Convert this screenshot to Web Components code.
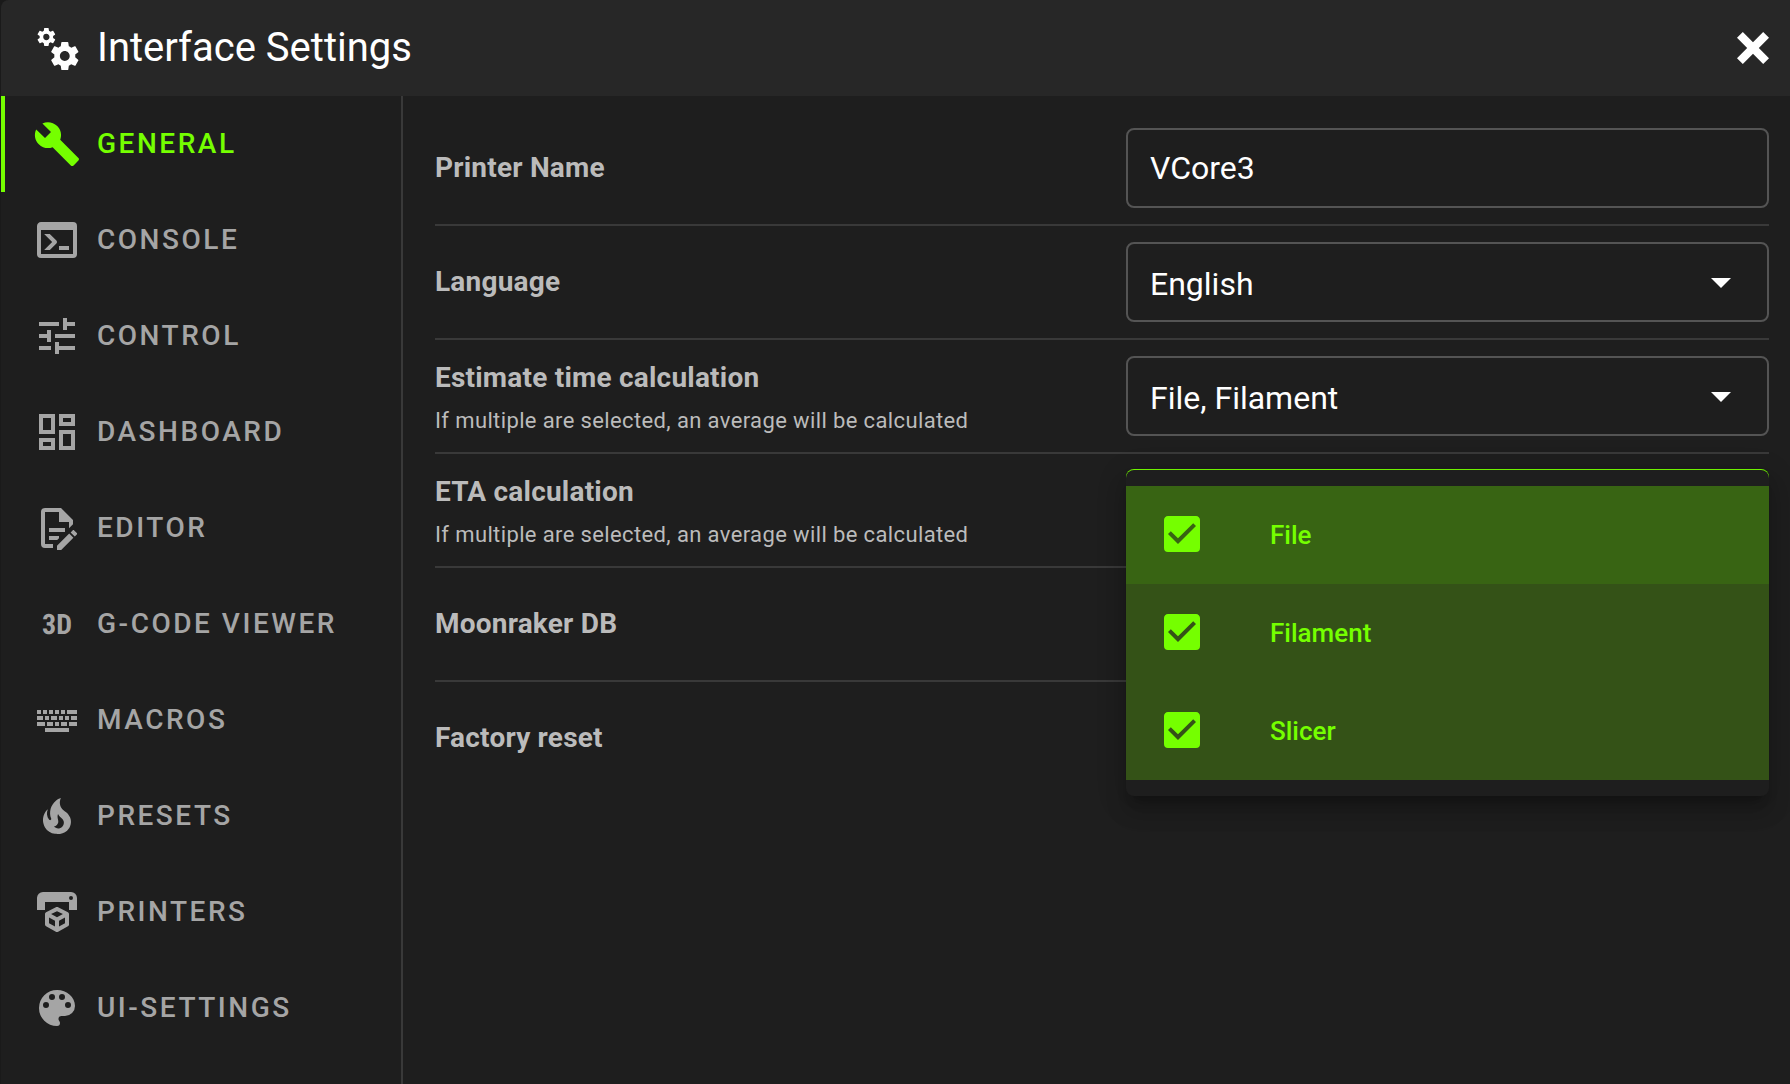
<!DOCTYPE html>
<html lang="en">
<head>
<meta charset="utf-8">
<meta name="viewport" content="width=device-width, initial-scale=1">
<title>Interface Settings</title>
<style>
  :root {
    --primary: #75ff00;
    --surface: #1e1e1e;
    --toolbar: #272727;
    --divider: #393939;
    --outline: #545454;
    --text: #ffffff;
    --text-soft: #bbbbbb;
    --text-tab: #a5a5a5;
  }
  body {
    margin: 0;
    padding-left: 1px;
    background: #1a1a1a;
    color: var(--text);
    font-family: Roboto, "Liberation Sans", sans-serif;
  }
</style>
</head>
<body>
<settings-dialog heading="Interface Settings">
  <settings-tab slot="tabs" icon="wrench" active>General</settings-tab>
  <settings-tab slot="tabs" icon="console">Console</settings-tab>
  <settings-tab slot="tabs" icon="tune">Control</settings-tab>
  <settings-tab slot="tabs" icon="dashboard">Dashboard</settings-tab>
  <settings-tab slot="tabs" icon="edit">Editor</settings-tab>
  <settings-tab slot="tabs" icon="video3d">G-Code Viewer</settings-tab>
  <settings-tab slot="tabs" icon="keyboard">Macros</settings-tab>
  <settings-tab slot="tabs" icon="fire">Presets</settings-tab>
  <settings-tab slot="tabs" icon="printer">Printers</settings-tab>
  <settings-tab slot="tabs" icon="palette">UI-Settings</settings-tab>

  <settings-row label="Printer Name" control="text" value="VCore3"></settings-row>
  <settings-row label="Language" control="select" value="English"></settings-row>
  <settings-row label="Estimate time calculation" hint="If multiple are selected, an average will be calculated" control="select" value="File, Filament"></settings-row>
  <settings-row label="ETA calculation" hint="If multiple are selected, an average will be calculated" control="menu">
    <option-menu>
      <option-item highlighted>File</option-item>
      <option-item>Filament</option-item>
      <option-item>Slicer</option-item>
    </option-menu>
  </settings-row>
  <settings-row label="Moonraker DB"></settings-row>
  <settings-row label="Factory reset"></settings-row>
</settings-dialog>

<script>
const ICONS = {
  cogs: 'M15.9,18.45C17.25,18.45 18.35,17.35 18.35,16C18.35,14.65 17.25,13.55 15.9,13.55C14.54,13.55 13.45,14.65 13.45,16C13.45,17.35 14.54,18.45 15.9,18.45M21.1,16.68L22.58,17.84C22.71,17.95 22.75,18.13 22.66,18.29L21.26,20.71C21.17,20.86 21,20.92 20.83,20.86L19.09,20.16C18.73,20.44 18.33,20.67 17.91,20.85L17.64,22.7C17.62,22.87 17.47,23 17.3,23H14.5C14.32,23 14.18,22.87 14.15,22.7L13.89,20.85C13.46,20.67 13.07,20.44 12.71,20.16L10.96,20.86C10.81,20.92 10.62,20.86 10.54,20.71L9.14,18.29C9.05,18.13 9.09,17.95 9.22,17.84L10.7,16.68L10.65,16L10.7,15.31L9.22,14.16C9.09,14.05 9.05,13.86 9.14,13.71L10.54,11.29C10.62,11.13 10.81,11.07 10.96,11.13L12.71,11.84C13.07,11.56 13.46,11.32 13.89,11.15L14.15,9.29C14.18,9.13 14.32,9 14.5,9H17.3C17.47,9 17.62,9.13 17.64,9.29L17.91,11.15C18.33,11.32 18.73,11.56 19.09,11.84L20.83,11.13C21,11.07 21.17,11.13 21.26,11.29L22.66,13.71C22.75,13.86 22.71,14.05 22.58,14.16L21.1,15.31L21.15,16L21.1,16.68M6.69,8.07C7.56,8.07 8.26,7.37 8.26,6.5C8.26,5.63 7.56,4.92 6.69,4.92A1.58,1.58 0 0,0 5.11,6.5C5.11,7.37 5.82,8.07 6.69,8.07M10.03,6.94L11,7.68C11.07,7.75 11.09,7.87 11.03,7.97L10.13,9.53C10.08,9.63 9.96,9.67 9.86,9.63L8.74,9.18L8,9.62L7.81,10.81C7.79,10.92 7.7,11 7.59,11H5.79C5.67,11 5.58,10.92 5.56,10.81L5.4,9.62L4.64,9.18L3.52,9.63C3.41,9.67 3.3,9.63 3.24,9.53L2.34,7.97C2.28,7.87 2.31,7.75 2.39,7.68L3.34,6.94L3.31,6.5L3.34,6.06L2.39,5.32C2.31,5.25 2.28,5.13 2.34,5.03L3.24,3.47C3.3,3.37 3.41,3.32 3.52,3.37L4.63,3.82L5.4,3.38L5.56,2.19C5.58,2.08 5.67,2 5.79,2H7.59C7.7,2 7.79,2.08 7.81,2.19L8,3.38L8.74,3.82L9.86,3.37C9.96,3.32 10.08,3.37 10.13,3.47L11.03,5.03C11.09,5.13 11.07,5.25 11,5.32L10.03,6.06L10.06,6.5L10.03,6.94Z',
  close: 'M20 6.91L17.09 4L12 9.09L6.91 4L4 6.91L9.09 12L4 17.09L6.91 20L12 14.91L17.09 20L20 17.09L14.91 12L20 6.91Z',
  wrench: 'M22.7,19L13.6,9.9C14.5,7.6 14,4.9 12.1,3C10.1,1 7.1,0.6 4.7,1.7L9,6L6,9L1.6,4.7C0.4,7.1 0.9,10.1 2.9,12.1C4.8,14 7.5,14.5 9.8,13.6L18.9,22.7C19.3,23.1 19.9,23.1 20.3,22.7L22.6,20.4C23.1,20 23.1,19.3 22.7,19Z',
  console: 'M20,19V7H4V19H20M20,3A2,2 0 0,1 22,5V19A2,2 0 0,1 20,21H4A2,2 0 0,1 2,19V5C2,3.89 2.9,3 4,3H20M13,17V15H18V17H13M9.58,13L5.57,9H8.4L11.7,12.3C12.09,12.69 12.09,13.33 11.7,13.72L8.42,17H5.59L9.58,13Z',
  tune: 'M3,17V19H9V17H3M3,5V7H13V5H3M13,21V19H21V17H13V15H11V21H13M7,9V11H3V13H7V15H9V9H7M21,13V11H11V13H21M15,9H17V7H21V5H17V3H15V9Z',
  dashboard: 'M19,5V7H15V5H19M9,5V11H5V5H9M19,13V19H15V13H19M9,17V19H5V17H9M21,3H13V9H21V3M11,3H3V13H11V3M21,11H13V21H21V11M11,15H3V21H11V15Z',
  edit: 'M8,12H16V14H8V12M10,20H6V4H13V9H18V12.1L20,10.1V8L14,2H6A2,2 0 0,0 4,4V20A2,2 0 0,0 6,22H10V20M8,18H12.1L13,17.1V16H8V18M20.2,13C20.3,13 20.5,13.1 20.6,13.2L21.9,14.5C22.1,14.7 22.1,15.1 21.9,15.3L20.9,16.3L18.8,14.2L19.8,13.2C19.9,13.1 20,13 20.2,13M20.2,16.9L14.1,23H12V20.9L18.1,14.8L20.2,16.9Z',
  keyboard: 'M6,16H18V18H6V16M6,13V15H2V13H6M7,15V13H10V15H7M11,15V13H13V15H11M14,15V13H17V15H14M18,15V13H22V15H18M2,10H5V12H2V10M19,12V10H22V12H19M18,12H16V10H18V12M8,12H6V10H8V12M12,12H9V10H12V12M15,12H13V10H15V12M2,9V7H4V9H2M5,9V7H7V9H5M8,9V7H10V9H8M11,9V7H13V9H11M14,9V7H16V9H14M17,9V7H22V9H17Z',
  fire: 'M17.66 11.2C17.43 10.9 17.15 10.64 16.89 10.38C16.22 9.78 15.46 9.35 14.82 8.72C13.33 7.26 13 4.85 13.95 3C13 3.23 12.17 3.75 11.46 4.32C8.87 6.4 7.85 10.07 9.07 13.22C9.11 13.32 9.15 13.42 9.15 13.55C9.15 13.77 9 13.97 8.8 14.05C8.57 14.15 8.33 14.09 8.14 13.93C8.08 13.88 8.04 13.83 8 13.76C6.87 12.33 6.69 10.28 7.45 8.64C5.78 10 4.87 12.3 5 14.47C5.06 14.97 5.12 15.47 5.29 15.97C5.43 16.57 5.7 17.17 6 17.7C7.08 19.43 8.95 20.67 10.96 20.92C13.1 21.19 15.39 20.8 17.03 19.32C18.86 17.66 19.5 15 18.56 12.72L18.43 12.46C18.22 12 17.66 11.2 17.66 11.2M14.5 17.5C14.22 17.74 13.76 18 13.4 18.1C12.28 18.5 11.16 17.94 10.5 17.28C11.69 17 12.4 16.12 12.61 15.23C12.78 14.43 12.46 13.77 12.33 13C12.21 12.26 12.23 11.63 12.5 10.94C12.69 11.32 12.89 11.7 13.13 12C13.9 13 15.11 13.44 15.37 14.8C15.41 14.94 15.43 15.08 15.43 15.23C15.46 16.05 15.1 16.95 14.5 17.5H14.5Z',
  printer: 'M19,6A1,1 0 0,0 20,5A1,1 0 0,0 19,4A1,1 0 0,0 18,5A1,1 0 0,0 19,6M19,2A3,3 0 0,1 22,5V11H18V7H6V11H2V5A3,3 0 0,1 5,2H19M18,18.25C18,18.63 17.79,18.96 17.47,19.13L12.57,21.82C12.4,21.94 12.21,22 12,22C11.79,22 11.59,21.94 11.43,21.82L6.53,19.13C6.21,18.96 6,18.63 6,18.25V13C6,12.62 6.21,12.29 6.53,12.12L11.43,9.68C11.59,9.56 11.79,9.5 12,9.5C12.21,9.5 12.4,9.56 12.57,9.68L17.47,12.12C17.79,12.29 18,12.62 18,13V18.25M12,11.65L9.04,13L12,14.6L14.96,13L12,11.65M8,17.66L11,19.29V16.33L8,14.71V17.66M16,17.66V14.71L13,16.33V19.29L16,17.66Z',
  palette: 'M17.5,12A1.5,1.5 0 0,1 16,10.5A1.5,1.5 0 0,1 17.5,9A1.5,1.5 0 0,1 19,10.5A1.5,1.5 0 0,1 17.5,12M14.5,8A1.5,1.5 0 0,1 13,6.5A1.5,1.5 0 0,1 14.5,5A1.5,1.5 0 0,1 16,6.5A1.5,1.5 0 0,1 14.5,8M9.5,8A1.5,1.5 0 0,1 8,6.5A1.5,1.5 0 0,1 9.5,5A1.5,1.5 0 0,1 11,6.5A1.5,1.5 0 0,1 9.5,8M6.5,12A1.5,1.5 0 0,1 5,10.5A1.5,1.5 0 0,1 6.5,9A1.5,1.5 0 0,1 8,10.5A1.5,1.5 0 0,1 6.5,12M12,3A9,9 0 0,0 3,12A9,9 0 0,0 12,21A1.5,1.5 0 0,0 13.5,19.5C13.5,19.11 13.35,18.76 13.11,18.5C12.88,18.23 12.73,17.88 12.73,17.5A1.5,1.5 0 0,1 14.23,16H16A5,5 0 0,0 21,11C21,6.58 16.97,3 12,3Z',
  caret: 'M7,10L12,15L17,10H7Z'
};

class UiIcon extends HTMLElement {
  connectedCallback() {
    if (this.shadowRoot) return;
    const name = this.getAttribute('name');
    // The 3D badge is lettering, so it is set as live text.
    const body = name === 'video3d'
      ? '<text x="12" y="17" text-anchor="middle">3D</text>'
      : `<path d="${ICONS[name]}"/>`;
    this.attachShadow({ mode: 'open' }).innerHTML = `
      <style>
        :host { display: block; flex: none; width: 48px; height: 48px; }
        svg { display: block; width: 100%; height: 100%; fill: currentColor; }
        text { font: 700 14px "Liberation Sans Narrow", "Roboto Condensed", Roboto, sans-serif; letter-spacing: normal; text-rendering: geometricPrecision; }
      </style>
      <svg viewBox="0 0 24 24" aria-hidden="true">${body}</svg>`;
  }
}

class SettingsDialog extends HTMLElement {
  connectedCallback() {
    if (this.shadowRoot) return;
    this.attachShadow({ mode: 'open' }).innerHTML = `
      <style>
        :host { display: flex; flex-direction: column; min-height: 100vh; background: var(--surface); border-top-left-radius: 8px; overflow: hidden; }
        header { display: flex; align-items: center; gap: 16px; height: 96px; padding: 0 13px 0 32px; background: var(--toolbar); }
        h1 { flex: 1; margin: 0; font-size: 40px; line-height: 48px; font-weight: 400; }
        button { padding: 0; border: 0; background: none; color: inherit; }
        .body { flex: 1; display: flex; }
        nav { flex: none; width: 400px; border-right: 2px solid var(--divider); }
        main { flex: 1; min-width: 0; padding: 16px 21px 16px 32px; }
      </style>
      <header>
        <ui-icon name="cogs"></ui-icon>
        <h1>${this.getAttribute('heading')}</h1>
        <button type="button" aria-label="Close"><ui-icon name="close"></ui-icon></button>
      </header>
      <div class="body">
        <nav><slot name="tabs"></slot></nav>
        <main><slot></slot></main>
      </div>`;
  }
}

class SettingsTab extends HTMLElement {
  connectedCallback() {
    if (this.shadowRoot) return;
    this.attachShadow({ mode: 'open' }).innerHTML = `
      <style>
        :host { display: block; color: var(--text-tab); }
        :host([active]) { color: var(--primary); box-shadow: inset 4px 0 var(--primary); }
        button { display: flex; align-items: center; gap: 16px; width: 100%; height: 96px; padding: 0 32px; border: 0; background: none; color: inherit; font: 500 28px/34px Roboto, "Liberation Sans", sans-serif; letter-spacing: 0.09em; text-transform: uppercase; white-space: nowrap; }
      </style>
      <button type="button"><ui-icon name="${this.getAttribute('icon')}"></ui-icon><span><slot></slot></span></button>`;
  }
}

class SettingsRow extends HTMLElement {
  connectedCallback() {
    if (this.shadowRoot) return;
    const label = this.getAttribute('label');
    const hint = this.getAttribute('hint');
    const value = this.getAttribute('value');
    const control = this.getAttribute('control');
    const fields = {
      text: `<input id="field" type="text" value="${value}">`,
      select: `<select id="field"><option>${value}</option></select><ui-icon name="caret"></ui-icon>`,
      menu: `<button id="field" type="button" aria-haspopup="listbox" aria-expanded="true"></button><div class="menu"><slot></slot></div>`
    };
    const title = control ? `<label for="field">${label}</label>` : `<span class="title">${label}</span>`;
    this.attachShadow({ mode: 'open' }).innerHTML = `
      <style>
        :host { display: grid; grid-template-columns: 1fr 1fr; column-gap: 48px; align-items: center; padding: 16px 0; }
        :host(:not(:last-child)) { border-bottom: 2px solid var(--divider); }
        .text { display: flex; flex-direction: column; gap: 10px; min-width: 0; color: var(--text-soft); }
        label, .title { font-size: 28px; line-height: 40px; font-weight: 700; letter-spacing: 0.0075em; }
        .hint { font-size: 22px; line-height: 26px; letter-spacing: 0.017em; }
        .control { display: grid; align-items: center; position: relative; min-width: 0; min-height: 80px; }
        input, select, button { grid-area: 1 / 1; box-sizing: border-box; width: 100%; height: 80px; margin: 0; padding: 0 22px; border: 2px solid var(--outline); border-radius: 8px; outline: 0; appearance: none; background: var(--surface); color: var(--text); font: 400 32px/40px Roboto, "Liberation Sans", sans-serif; }
        select { padding-top: 4px; }
        ui-icon { grid-area: 1 / 1; justify-self: end; margin-right: 24px; pointer-events: none; }
        button { border-color: var(--primary); box-shadow: 0 -1px var(--primary); }
        .menu { position: absolute; inset: 0 0 auto 0; z-index: 2; }
      </style>
      <div class="text">${title}${hint ? `<span class="hint">${hint}</span>` : ''}</div>
      <div class="control">${fields[control] || ''}</div>`;
  }
}

class OptionMenu extends HTMLElement {
  connectedCallback() {
    if (this.shadowRoot) return;
    this.attachShadow({ mode: 'open' }).innerHTML = `
      <style>
        :host { display: block; padding: 16px 0; border-radius: 8px; background: var(--surface); box-shadow: 0 10px 10px -6px rgba(0,0,0,.2), 0 16px 20px 2px rgba(0,0,0,.14), 0 6px 28px 4px rgba(0,0,0,.12); }
      </style>
      <slot></slot>`;
  }
}

class OptionItem extends HTMLElement {
  connectedCallback() {
    if (this.shadowRoot) return;
    this.attachShadow({ mode: 'open' }).innerHTML = `
      <style>
        :host { display: block; background: #345217; }
        :host([highlighted]) { background: #386413; }
        label { display: flex; align-items: flex-start; gap: 64px; padding: 24px 32px; color: var(--primary); font-size: 26px; line-height: 50px; font-weight: 500; }
        input { flex: none; width: 48px; height: 48px; margin: 0; appearance: none; background: var(--primary); clip-path: path(evenodd, "M20,34L10,24L12.82,21.16L20,28.34L35.18,13.16L38,16ZM38,6H10C7.78,6 6,7.78 6,10V38A4,4 0 0 0 10,42H38A4,4 0 0 0 42,38V10C42,7.78 40.2,6 38,6Z"); }
      </style>
      <label><input type="checkbox" checked><span><slot></slot></span></label>`;
  }
}

customElements.define('ui-icon', UiIcon);
customElements.define('settings-dialog', SettingsDialog);
customElements.define('settings-tab', SettingsTab);
customElements.define('settings-row', SettingsRow);
customElements.define('option-menu', OptionMenu);
customElements.define('option-item', OptionItem);
</script>
</body>
</html>
